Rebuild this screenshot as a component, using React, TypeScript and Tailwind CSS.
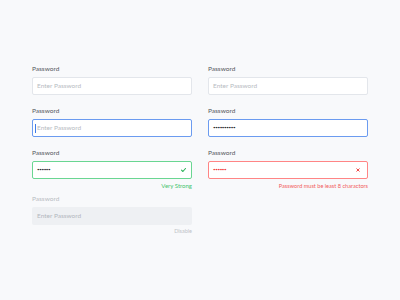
import React from "react";

const font = { fontFamily: "Lato, 'Open Sans', sans-serif" };

function Label({ children, disabled }: { children: React.ReactNode; disabled?: boolean }) {
  return (
    <div className={`h-[8px] leading-[8px] text-[6.5px] ${disabled ? "text-[#b9bcc2]" : "text-[#55585d]"}`}>
      {children}
    </div>
  );
}

export default function App() {
  return (
    <div className="w-[400px] h-[300px] bg-[#f8f9fb] pt-[65px] pl-[32px]" style={font}>
      <div className="flex gap-[16px]">
        {/* Left column */}
        <div className="flex flex-col w-[160px]">
          <Label>Password</Label>
          <div className="mt-[4px] h-[18px] bg-white border border-[#e3e6eb] rounded-[2px] flex items-center pl-[4px] text-[6.5px] text-[#b7bbc2]">
            Enter Password
          </div>

          <div className="mt-[12px]">
            <Label>Password</Label>
          </div>
          <div className="mt-[4px] h-[18px] bg-white border border-[#6b9bf0] rounded-[2px] flex items-center pl-[2px] text-[6.5px] text-[#b7bbc2]">
            <span className="w-[1px] h-[9px] bg-[#3f7ce8] mr-[1px]" />
            Enter Password
          </div>

          <div className="mt-[12px]">
            <Label>Password</Label>
          </div>
          <div className="mt-[4px] h-[18px] bg-white border border-[#6ad692] rounded-[2px] flex items-center justify-between pl-[4px] pr-[5px]">
            <span className="text-[4.5px] leading-none text-[#2c2f33] tracking-[-0.4px]">••••••</span>
            <svg width="5" height="4" viewBox="0 0 10 8" fill="none">
              <path d="M1 4.2 L3.8 7 L9 1" stroke="#2fb35c" strokeWidth="2.2" strokeLinecap="round" strokeLinejoin="round" />
            </svg>
          </div>
          <div className="mt-[3px] h-[8px] leading-[8px] text-[6px] text-[#45c46e] text-right">Very Strong</div>

          <div className="mt-[5px]">
            <Label disabled>Password</Label>
          </div>
          <div className="mt-[4px] h-[18px] bg-[#eef0f3] rounded-[2px] flex items-center pl-[5px] text-[6.5px] text-[#b3b7be]">
            Enter Password
          </div>
          <div className="mt-[2px] h-[8px] leading-[8px] text-[5.5px] text-[#c0c3c8] text-right">Disable</div>
        </div>

        {/* Right column */}
        <div className="flex flex-col w-[160px]">
          <Label>Password</Label>
          <div className="mt-[4px] h-[18px] bg-white border border-[#e3e6eb] rounded-[2px] flex items-center pl-[4px] text-[6.5px] text-[#b7bbc2]">
            Enter Password
          </div>

          <div className="mt-[12px]">
            <Label>Password</Label>
          </div>
          <div className="mt-[4px] h-[18px] bg-white border border-[#6b9bf0] rounded-[2px] flex items-center pl-[4px]">
            <span className="text-[4.5px] leading-none text-[#2c2f33] tracking-[-0.4px]">••••••••••</span>
          </div>

          <div className="mt-[12px]">
            <Label>Password</Label>
          </div>
          <div className="mt-[4px] h-[18px] bg-white border border-[#ff8585] rounded-[2px] flex items-center justify-between pl-[4px] pr-[7px]">
            <span className="text-[4.5px] leading-none text-[#f03a3a] tracking-[-0.4px]">••••••</span>
            <svg width="4" height="4" viewBox="0 0 8 8" fill="none">
              <path d="M1.5 1.5 L6.5 6.5 M6.5 1.5 L1.5 6.5" stroke="#f04848" strokeWidth="2" strokeLinecap="round" />
            </svg>
          </div>
          <div className="mt-[3px] h-[8px] leading-[8px] text-[5.6px] text-[#f25c5c] text-right">Password must be least 8 charactors</div>
        </div>
      </div>
    </div>
  );
}
